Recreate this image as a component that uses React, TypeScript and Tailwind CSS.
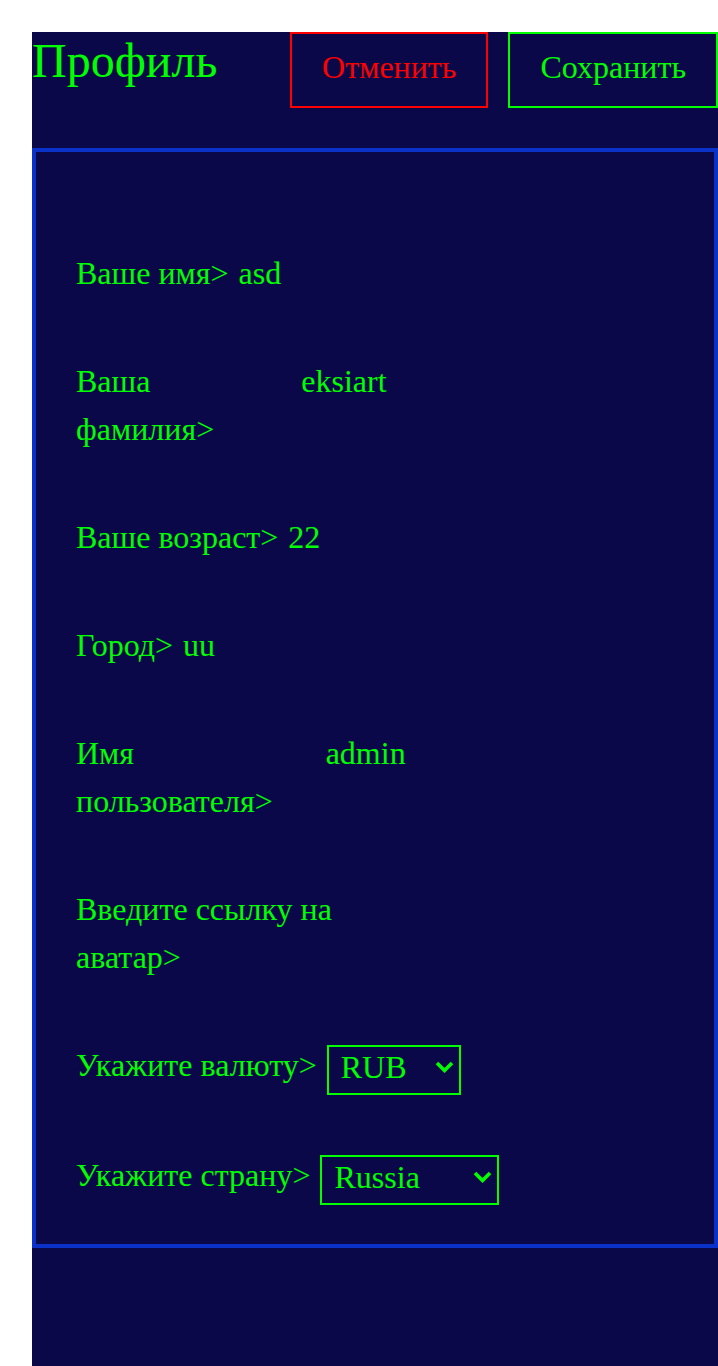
import React from 'react';

function Chevron() {
  return (
    <svg
      className="pointer-events-none absolute right-[7px] top-[18px]"
      width="19"
      height="12"
      viewBox="0 0 19 12"
      fill="none"
    >
      <path d="M2 2 L9.5 9.5 L17 2" stroke="#00ff00" strokeWidth="3.6" />
    </svg>
  );
}

function TextRow({ label, value }: { label: string; value: string }) {
  return (
    <label className="flex gap-[10px]">
      <span>{label}</span>
      <input
        defaultValue={value}
        className="h-[48px] w-[382px] min-w-0 bg-transparent text-[#00ff00] outline-none"
      />
    </label>
  );
}

function SelectRow({
  label,
  width,
  options,
}: {
  label: string;
  width: string;
  options: string[];
}) {
  return (
    <label className="flex h-[50px] items-start gap-[10px]">
      <span className="shrink-0">{label}</span>
      <div className="relative mt-[2px] shrink-0">
        <select
          className={`${width} h-[50px] appearance-none border-2 border-[#00ff00] bg-transparent pb-[5px] pl-[12px] leading-[32px] text-[#00ff00] outline-none`}
        >
          {options.map((o) => (
            <option key={o} className="bg-[#0a0848]">
              {o}
            </option>
          ))}
        </select>
        <Chevron />
      </div>
    </label>
  );
}

export default function App() {
  return (
    <div className="min-h-screen bg-white pl-[32px] pt-[32px] font-['Liberation_Serif',serif]">
      <div className="min-h-[1334px] bg-[#0a0848] text-[#00ff00]">
        <header className="flex items-start justify-between">
          <h1 className="text-[48px] leading-[1.2]">Профиль</h1>
          <div className="flex gap-[20px]">
            <button className="border-2 border-[#ff0000] px-[30px] pt-[9px] pb-[15px] text-[32px] leading-[48px] text-[#ff0000]">
              Отменить
            </button>
            <button className="border-2 border-[#00ff00] px-[30px] pt-[9px] pb-[15px] text-[32px] leading-[48px] text-[#00ff00]">
              Сохранить
            </button>
          </div>
        </header>

        <form className="mt-[40px] flex flex-col gap-[60px] border-4 border-[#0a32c8] px-[40px] pt-[97px] pb-[43px] text-[32px] leading-[48px]">
          <TextRow label="Ваше имя>" value="asd" />
          <TextRow label="Ваша фамилия>" value="eksiart" />
          <TextRow label="Ваше возраст>" value="22" />
          <TextRow label="Город>" value="uu" />
          <TextRow label="Имя пользователя>" value="admin" />
          <TextRow label="Введите ссылку на аватар>" value="" />
          <SelectRow label="Укажите валюту>" width="w-[134px]" options={['RUB', 'USD', 'EUR']} />
          <SelectRow
            label="Укажите страну>"
            width="w-[179px]"
            options={['Russia', 'Belarus', 'Kazakhstan']}
          />
        </form>
      </div>
    </div>
  );
}
